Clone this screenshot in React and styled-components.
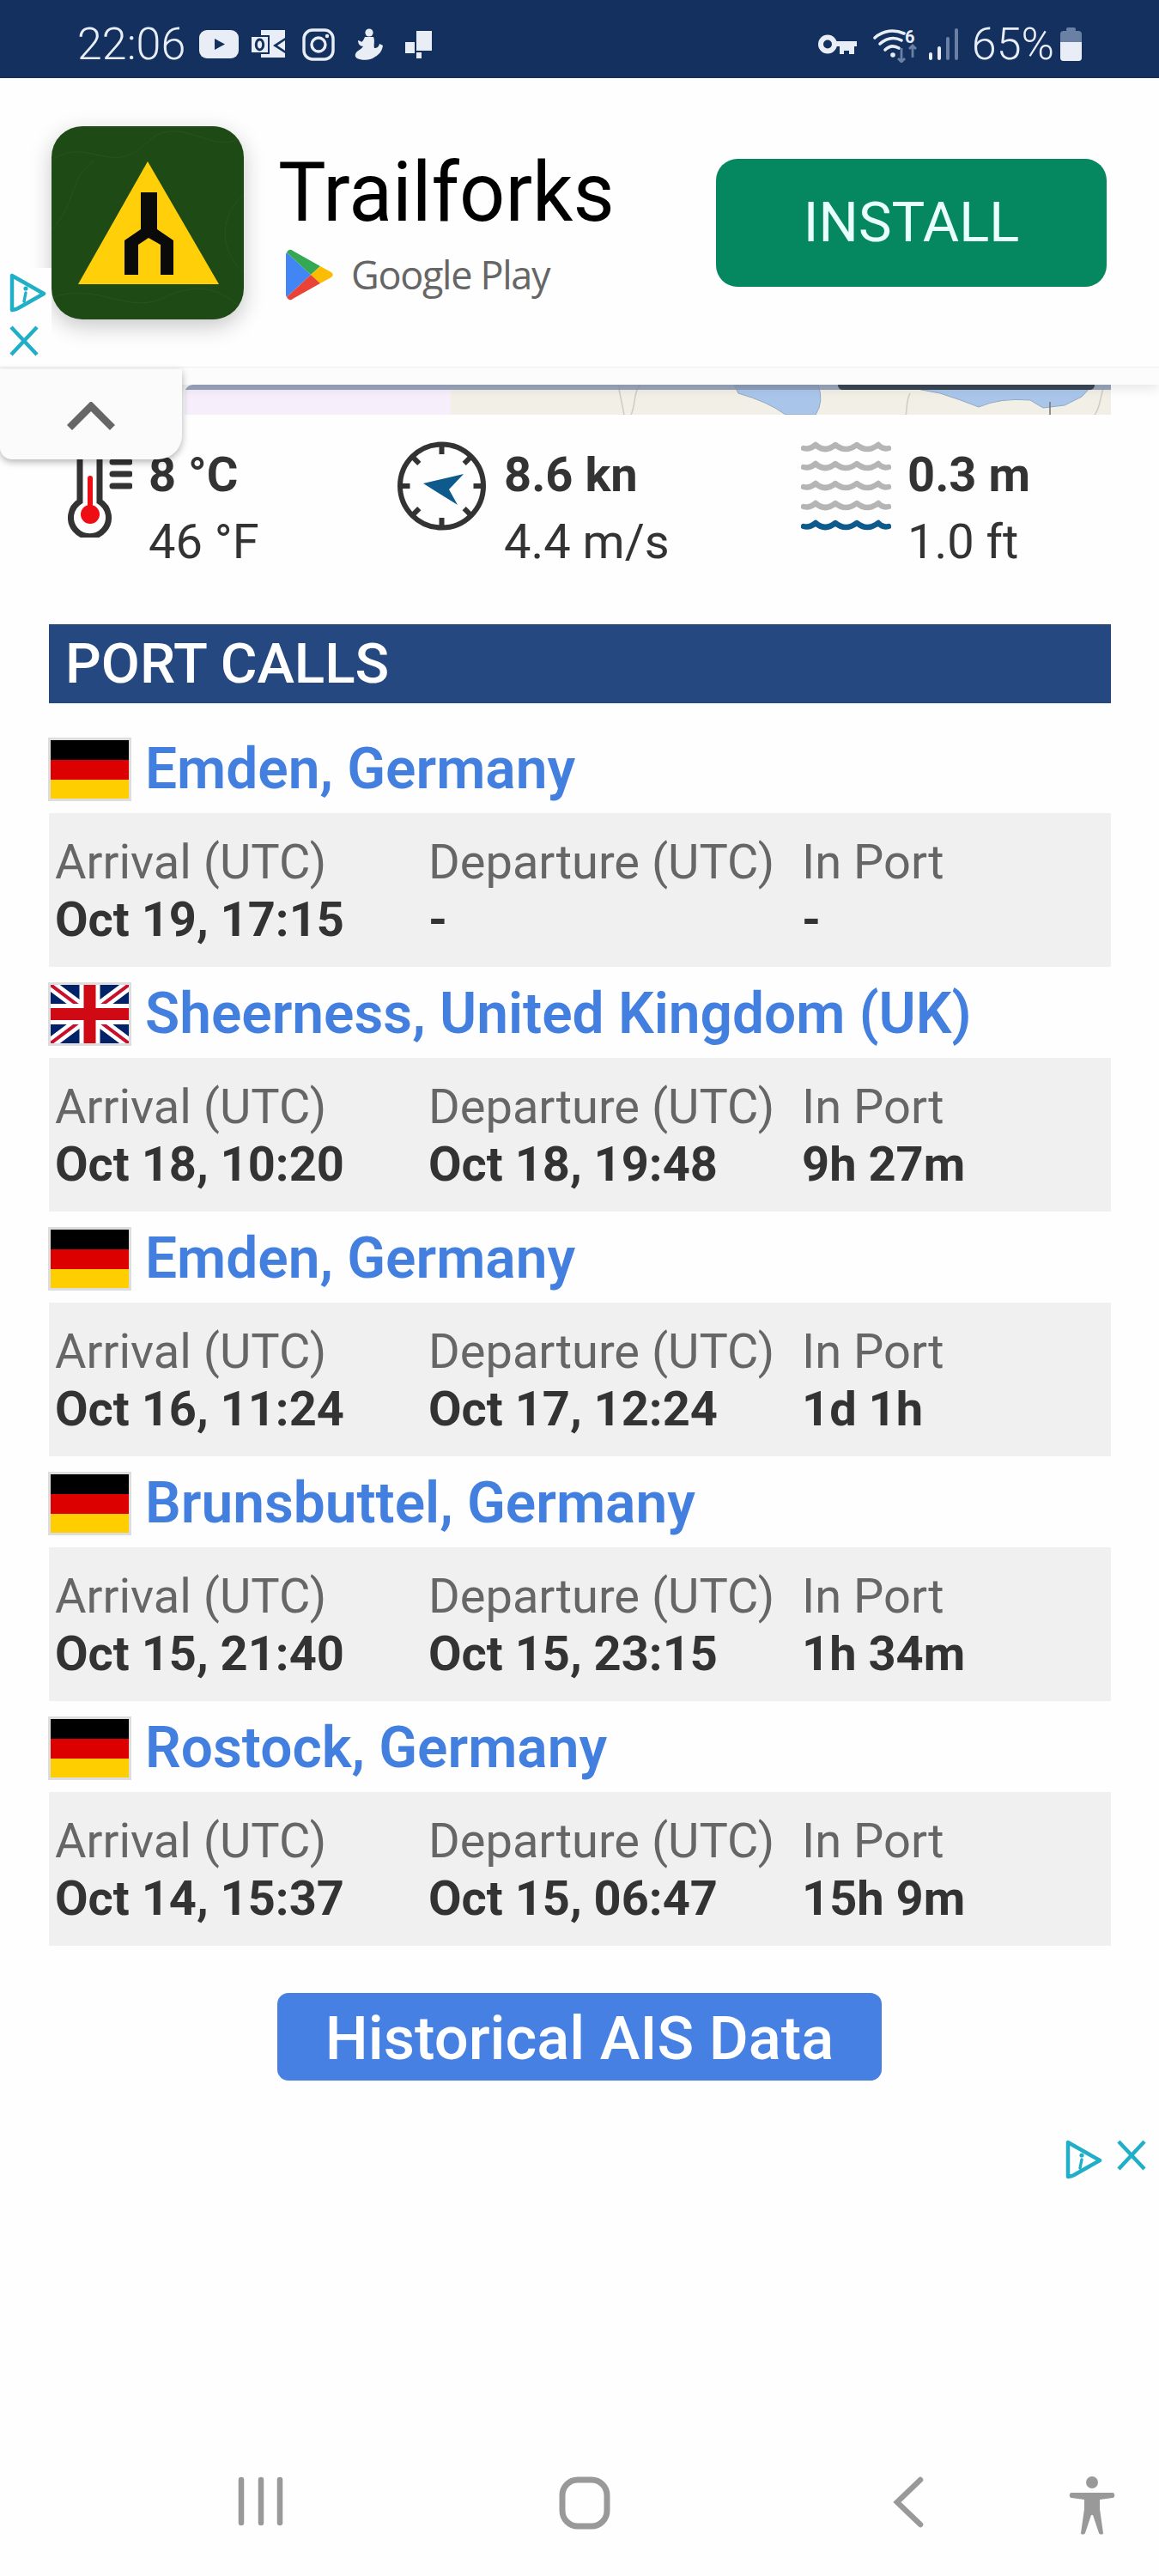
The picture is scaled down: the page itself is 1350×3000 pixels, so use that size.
import React from "react";
import styled, { createGlobalStyle } from "styled-components";

const Global = createGlobalStyle`
  html, body { margin: 0; padding: 0; background: #fff; }
  body { font-family: Roboto, "Liberation Sans", sans-serif; }
`;

const Page = styled.div`
  position: relative;
  width: 1350px;
  height: 3000px;
  overflow: hidden;
  background: #fefefe;
`;

const StatusBar = styled.header`
  height: 91px;
  background: #14305f;
  display: flex;
  align-items: center;
  justify-content: space-between;
  padding: 12px 90px 0 90px;
  box-sizing: border-box;
  color: #e9eef6;
`;
const StatusGroup = styled.div`
  display: flex;
  align-items: center;
`;
const StatusSlot = styled.span`
  display: flex;
  align-items: center;
  margin-left: ${(p) => p.$ml || 0}px;
`;
const StatusText = styled.span`
  font-size: 52px;
  font-weight: 300;
  line-height: 54px;
  margin-left: ${(p) => p.$ml || 0}px;
`;

const AdBanner = styled.section`
  position: relative;
  height: 336px;
  background: #fefefe;
  display: flex;
  align-items: flex-start;
  padding: 56px 61px 0 60px;
  box-sizing: border-box;
  z-index: 3;
`;
const AppIcon = styled.div`
  width: 224px;
  height: 225px;
  border-radius: 36px;
  background: #1f4a17;
  overflow: hidden;
  flex: none;
  box-shadow: 0 8px 26px rgba(0, 0, 0, 0.22);
`;
const AppInfo = styled.div`
  margin-left: 40px;
  width: 510px;
  display: flex;
  flex-direction: column;
`;
const AppName = styled.div`
  font-size: 93.5px;
  line-height: 106px;
  margin-top: 24px;
  color: #000;
  transform: scaleY(1.03);
  transform-origin: left center;
`;
const StoreRow = styled.div`
  display: flex;
  align-items: center;
  margin-top: 13px;
  margin-left: 9px;
  gap: 21px;
`;
const StoreName = styled.span`
  font-family: "Open Sans", Roboto, sans-serif;
  font-size: 45px;
  line-height: 60px;
  color: #666;
  letter-spacing: -1.3px;
`;
const InstallButton = styled.div`
  width: 455px;
  height: 149px;
  margin-top: 38px;
  padding-bottom: 2px;
  box-sizing: border-box;
  border-radius: 25px;
  background: #058760;
  color: #e8fffa;
  font-size: 65px;
  font-weight: 400;
  display: flex;
  align-items: center;
  justify-content: center;
  flex: none;
`;
const AdChoicesPatch = styled.div`
  position: absolute;
  left: 0;
  top: 221px;
  width: 60px;
  height: 112px;
  background: #fefefe;
  display: flex;
  flex-direction: column;
  padding: 6px 0 0 10px;
  box-sizing: border-box;
  gap: 15px;
`;
const AdStrip = styled.div`
  position: relative;
  height: 21px;
  background: #fcfcfc;
  border-top: 1px solid #eee;
  box-sizing: border-box;
  box-shadow: 0 4px 14px rgba(0, 0, 0, 0.1);
  z-index: 2;
`;
const MapStrip = styled.div`
  margin-left: 215px;
  width: 1079px;
  height: 35px;
  border-top-left-radius: 10px;
  overflow: hidden;
  line-height: 0;
`;
const CollapseTab = styled.div`
  position: absolute;
  left: 0;
  top: 430px;
  width: 212px;
  height: 105px;
  background: #fbfbfb;
  border-radius: 0 0 28px 14px;
  box-shadow: 0 3px 8px rgba(0, 0, 0, 0.3);
  z-index: 4;
  display: flex;
  justify-content: center;
  padding-top: 38px;
  box-sizing: border-box;
`;

const Weather = styled.section`
  display: grid;
  grid-template-columns: 384px 470px 1fr;
  margin-top: 31px;
  padding-left: 79px;
`;
const WeatherCell = styled.div`
  display: flex;
  align-items: flex-start;
  gap: ${(p) => p.$gap}px;
`;
const WeatherText = styled.div`
  font-size: 56px;
  line-height: 78px;
  color: #333;
`;
const WeatherMain = styled.div`
  font-weight: 700;
`;

const Section = styled.section`
  margin: 57px 56px 0 57px;
`;
const SectionTitle = styled.h2`
  margin: 0 0 22px;
  height: 92px;
  background: #24487f;
  color: #fff;
  font-size: 65.5px;
  font-weight: 500;
  line-height: 92px;
  padding-left: 19px;
`;
const PortName = styled.div`
  display: flex;
  align-items: flex-start;
  gap: 16px;
  height: 106px;
  padding-top: 18px;
  box-sizing: border-box;
  margin-left: -1px;
`;
const PortLink = styled.a`
  font-size: 65.8px;
  font-weight: 600;
  line-height: 74px;
  color: #437fdf;
  text-decoration: none;
`;
const FlagFrame = styled.div`
  width: 97px;
  height: 74px;
  border: 3px solid #ddd;
  box-sizing: border-box;
  flex: none;
  line-height: 0;
`;
const PortPanel = styled.div`
  display: grid;
  grid-template-columns: 435px 435px 1fr;
  height: 179px;
  padding: 24px 0 0 7px;
  box-sizing: border-box;
  background: #f0f0f0;
`;
const PortLabel = styled.div`
  font-size: 56px;
  line-height: 67px;
  color: #666;
  white-space: nowrap;
`;
const PortValue = styled.div`
  font-size: 56px;
  line-height: 67px;
  font-weight: 700;
  color: #333;
  white-space: nowrap;
`;

const HistoryWrap = styled.div`
  display: flex;
  justify-content: center;
  margin-top: 55px;
`;
const HistoryButton = styled.a`
  width: 704px;
  height: 102px;
  padding-top: 4px;
  box-sizing: border-box;
  border-radius: 13px;
  background: #4680e2;
  color: #fff;
  font-size: 70.5px;
  font-weight: 500;
  display: flex;
  align-items: center;
  justify-content: center;
`;
const AdSlot = styled.div`
  display: flex;
  justify-content: flex-end;
  align-items: flex-start;
  gap: 16px;
  height: 461px;
  padding: 69px 14px 0 0;
  box-sizing: border-box;
`;
const NavBar = styled.nav`
  display: grid;
  grid-template-columns: 374px 389px 205px 1fr;
  padding-left: 277px;
  align-items: start;
`;

const Y = "#21afc8";

const AdChoices = () => (
  <svg width="44" height="46" viewBox="0 0 44 46" fill="none">
    <path d="M4 3 L41 24 L11 41 M4 3 L4 43 L9 42" stroke={Y} strokeWidth="4.5" strokeLinecap="round" strokeLinejoin="round" />
    <circle cx="20" cy="18" r="2.6" fill={Y} />
    <path d="M20 23 L18 33" stroke={Y} strokeWidth="3.4" strokeLinecap="round" />
  </svg>
);
const AdClose = () => (
  <svg width="36" height="36" viewBox="0 0 36 36" fill="none">
    <path d="M3 2 L33 34 M33 2 L3 34" stroke={Y} strokeWidth="4.5" />
  </svg>
);

const C = "#e9eef6";
const Dim = "#6b80a5";

const YouTube = () => (
  <svg width="46" height="33" viewBox="0 0 46 33">
    <rect width="46" height="33" rx="9" fill={C} />
    <path d="M18 10 L30 16.5 L18 23Z" fill="#14305f" />
  </svg>
);
const Outlook = () => (
  <svg width="44" height="34" viewBox="0 0 44 34">
    <path d="M12 0 H40 V9 L26 18 L40 27 V32 H12Z" fill={C} />
    <path d="M40 12 V24 L31 18Z" fill={C} />
    <rect x="0" y="7" width="21" height="20" fill={C} stroke="#14305f" strokeWidth="2" />
    <ellipse cx="10.5" cy="17" rx="4.2" ry="6" fill="none" stroke="#14305f" strokeWidth="3" />
  </svg>
);
const Instagram = () => (
  <svg width="38" height="38" viewBox="0 0 38 38" fill="none">
    <rect x="2" y="2" width="34" height="34" rx="10" stroke={C} strokeWidth="3.4" />
    <circle cx="19" cy="19" r="8" stroke={C} strokeWidth="3.4" />
    <circle cx="29" cy="9" r="2.2" fill={C} />
  </svg>
);
const Figure = () => (
  <svg width="33" height="38" viewBox="0 0 33 38">
    <circle cx="17" cy="5" r="4.6" fill={C} />
    <path d="M12 10 H22 C24 15 22 18 23 23 C26 23 28 22 29 18 L33 20 C32 27 28 31 24 33 C20 37 9 38 3 35 C0 33 0 30 3 27 C5 25 8 24 10 21 C6 21 4 18 4 14 L7 15 C8 17 10 15 12 10Z" fill={C} />
  </svg>
);
const Blocks = () => (
  <svg width="31" height="32" viewBox="0 0 31 32" fill={C}>
    <rect x="13" y="0" width="18" height="23" />
    <rect x="0" y="13" width="11" height="13" />
    <rect x="13" y="25" width="6" height="7" />
  </svg>
);
const Key = () => (
  <svg width="47" height="26" viewBox="0 0 47 26" fill="none">
    <circle cx="12" cy="12.5" r="8" stroke={C} strokeWidth="6" />
    <path d="M20 9 H46 V15 H43 V24 H37 V20 H31 V24 H26 V15 H20Z" fill={C} />
  </svg>
);
const Wifi = () => (
  <svg width="52" height="42" viewBox="0 0 52 42" fill="none">
    <path d="M2 13 C12 4 25 3 36 8" stroke={C} strokeWidth="3.6" strokeLinecap="round" />
    <path d="M8 20 C16 13 25 12 33 16" stroke={C} strokeWidth="3.6" strokeLinecap="round" />
    <path d="M14 27 C19 22 25 22 30 25" stroke={C} strokeWidth="3.6" strokeLinecap="round" />
    <circle cx="23" cy="33" r="2.8" fill={C} />
    <path d="M33 25 V41 M29 37 L33 41 L37 37" stroke={Dim} strokeWidth="2.8" />
    <path d="M46 36 V22 M42 26 L46 22 L50 26" stroke={Dim} strokeWidth="2.8" />
    <text x="37" y="19" fontFamily="Roboto" fontWeight="700" fontSize="20" fill={C}>6</text>
  </svg>
);
const Signal = () => (
  <svg width="35" height="37" viewBox="0 0 35 37">
    <rect x="0" y="28" width="4" height="9" rx="2" fill={C} />
    <rect x="10" y="21" width="4" height="16" rx="2" fill={C} />
    <rect x="20" y="10" width="4" height="27" rx="2" fill={Dim} />
    <rect x="30" y="0" width="4" height="37" rx="2" fill={Dim} />
  </svg>
);
const Battery = () => (
  <svg width="25" height="39" viewBox="0 0 25 39">
    <rect x="7" y="0" width="11" height="5" rx="2" fill={Dim} />
    <rect x="0" y="4" width="25" height="35" rx="4" fill={Dim} />
    <path d="M0 17 H25 V35 A4 4 0 0 1 21 39 H4 A4 4 0 0 1 0 35Z" fill={C} />
  </svg>
);

const ForkIcon = () => (
  <svg width="224" height="225" viewBox="0 0 224 225">
    <g fill="none" stroke="#2a5a20" strokeWidth="1" opacity="0.7">
      <path d="M0 40 C40 10 70 60 110 20 S190 40 224 10" />
      <path d="M0 120 C30 90 20 60 50 40 M224 80 C190 110 200 150 224 170" />
      <path d="M0 200 C50 180 90 220 130 200 S200 190 224 215" />
    </g>
    <path d="M112 41 L195 184 H31Z" fill="#ffcf0a" />
    <path d="M104 77 H123 V120 L142 133 V173 H127 V138 L113 130 L101 138 V173 H85 V133 L104 120Z" fill="#0a0a0a" />
  </svg>
);
const PlayLogo = () => (
  <svg width="55" height="60" viewBox="0 0 55 60">
    <path d="M1 4 C0 5 0 6 0 8 V52 C0 54 0 55 1 56 L29 30Z" fill="#4285f4" />
    <path d="M1 4 C3 0 6 0 8 2 L40 20 L29 30Z" fill="#34a853" />
    <path d="M40 20 L51 26 C56 29 56 31 51 34 L40 40 L29 30Z" fill="#fbbc04" />
    <path d="M1 56 C3 60 6 60 8 58 L40 40 L29 30Z" fill="#ea4335" />
  </svg>
);
const Chevron = () => (
  <svg width="56" height="34" viewBox="0 0 56 34" fill="none">
    <path d="M3 30 L28 5 L53 30" stroke="#666" strokeWidth="8.5" />
  </svg>
);
const MapArt = () => (
  <svg width="1079" height="35" viewBox="0 0 1079 35">
    <rect width="310" height="35" fill="#f6effb" />
    <rect x="310" width="769" height="35" fill="#f2efe6" />
    <path d="M640 0 L645 10 Q680 20 700 35 L735 35 Q745 20 738 0Z" fill="#a9c6ea" stroke="#8fa9c4" strokeWidth="1" />
    <path d="M848 4 L880 10 Q905 18 925 26 Q950 15 985 18 L1000 27 L1025 24 L1045 14 L1058 0 L848 0Z" fill="#a9c6ea" stroke="#8fa9c4" strokeWidth="1" />
    <g fill="none" stroke="#cfcdc4" strokeWidth="1.6">
      <path d="M505 0 L512 35 M530 0 C522 12 526 22 520 35" />
      <path d="M845 10 C840 20 842 28 840 35 M1070 4 C1066 18 1066 28 1060 35" />
    </g>
    <path d="M1008 20 V35" stroke="#777" strokeWidth="1.6" />
    <rect width="1079" height="6" fill="#8b99b3" opacity="0.85" />
    <path d="M761 0 H1060 V1 A6 6 0 0 1 1054 6 H767 A6 6 0 0 1 761 1Z" fill="#3b4656" />
  </svg>
);

const Thermometer = () => (
  <svg width="75" height="112" viewBox="0 0 75 112" fill="none">
    <path d="M14 0 V70 A22 22 0 1 0 37 70 V0" stroke="#333" strokeWidth="7" />
    <circle cx="26" cy="85" r="11" fill="#ee0d14" />
    <path d="M26 43 V85" stroke="#ee0d14" strokeWidth="6" strokeLinecap="round" />
    <path d="M52 24 H72 M52 38 H72 M52 52 H72" stroke="#333" strokeWidth="7" strokeLinecap="round" />
  </svg>
);
const Compass = () => {
  const ticks = [0, 45, 90, 135, 180, 225, 270, 315];
  return (
    <svg width="103" height="104" viewBox="0 0 103 104" fill="none">
      <circle cx="51.5" cy="52" r="48.5" stroke="#333" strokeWidth="6" />
      {ticks.map((a) => (
        <path key={a} d="M51.5 3 V15" stroke="#333" strokeWidth="6" transform={`rotate(${a} 51.5 52)`} />
      ))}
      <path d="M30 49 L77 38 L60 56 L70 74Z" fill="#0f5a8c" />
    </svg>
  );
};
const Waves = () => {
  const wave = (y) =>
    `M3 ${y + 1} Q10 ${y + 3} 17 ${y - 3} Q28 ${y + 7} 40 ${y - 3} Q52 ${y + 7} 65 ${y - 3} Q77 ${y + 7} 90 ${y - 3} Q95 ${y + 3} 102 ${y + 1}`;
  return (
    <svg width="105" height="104" viewBox="0 0 105 104" fill="none" strokeWidth="6.5" strokeLinecap="round" strokeLinejoin="round">
      {[7, 29, 52, 75].map((y) => (
        <path key={y} d={wave(y)} stroke="#b5b5b5" />
      ))}
      <path d={wave(98)} stroke="#0f5a8c" />
    </svg>
  );
};

const GermanFlag = () => (
  <svg width="91" height="68" viewBox="0 0 91 68" preserveAspectRatio="none">
    <rect width="91" height="23" fill="#000" />
    <rect y="23" width="91" height="23" fill="#dd0000" />
    <rect y="46" width="91" height="22" fill="#ffce00" />
  </svg>
);
const UkFlag = () => (
  <svg width="91" height="68" viewBox="0 0 91 68">
    <rect width="91" height="68" fill="#012169" />
    <path d="M0 0 L91 68 M91 0 L0 68" stroke="#fff" strokeWidth="13" />
    <path d="M0 0 L91 68 M91 0 L0 68" stroke="#c8102e" strokeWidth="4" />
    <path d="M45.5 0 V68 M0 34 H91" stroke="#fff" strokeWidth="24" />
    <path d="M45.5 0 V68 M0 34 H91" stroke="#cf0a14" strokeWidth="14" />
  </svg>
);

const calls = [
  { name: "Emden, Germany", flag: "de", arr: "Oct 19, 17:15", dep: "-", port: "-" },
  { name: "Sheerness, United Kingdom (UK)", flag: "uk", arr: "Oct 18, 10:20", dep: "Oct 18, 19:48", port: "9h 27m" },
  { name: "Emden, Germany", flag: "de", arr: "Oct 16, 11:24", dep: "Oct 17, 12:24", port: "1d 1h" },
  { name: "Brunsbuttel, Germany", flag: "de", arr: "Oct 15, 21:40", dep: "Oct 15, 23:15", port: "1h 34m" },
  { name: "Rostock, Germany", flag: "de", arr: "Oct 14, 15:37", dep: "Oct 15, 06:47", port: "15h 9m" },
];

const Field = ({ label, value }) => (
  <div>
    <PortLabel>{label}</PortLabel>
    <PortValue>{value}</PortValue>
  </div>
);

export default function App() {
  return (
    <Page>
      <Global />
      <StatusBar>
        <StatusGroup>
          <StatusText>22:06</StatusText>
          <StatusSlot $ml={16}><YouTube /></StatusSlot>
          <StatusSlot $ml={14}><Outlook /></StatusSlot>
          <StatusSlot $ml={16}><Instagram /></StatusSlot>
          <StatusSlot $ml={23}><Figure /></StatusSlot>
          <StatusSlot $ml={26}><Blocks /></StatusSlot>
        </StatusGroup>
        <StatusGroup>
          <StatusSlot><Key /></StatusSlot>
          <StatusSlot $ml={18}><Wifi /></StatusSlot>
          <StatusSlot $ml={13}><Signal /></StatusSlot>
          <StatusText $ml={15}>65%</StatusText>
          <StatusSlot $ml={7}><Battery /></StatusSlot>
        </StatusGroup>
      </StatusBar>

      <AdBanner>
        <AppIcon><ForkIcon /></AppIcon>
        <AppInfo>
          <AppName>Trailforks</AppName>
          <StoreRow>
            <PlayLogo />
            <StoreName>Google Play</StoreName>
          </StoreRow>
        </AppInfo>
        <InstallButton>INSTALL</InstallButton>
        <AdChoicesPatch>
          <AdChoices />
          <AdClose />
        </AdChoicesPatch>
      </AdBanner>
      <AdStrip />
      <MapStrip><MapArt /></MapStrip>
      <CollapseTab><Chevron /></CollapseTab>

      <Weather>
        <WeatherCell $gap={19}>
          <Thermometer />
          <WeatherText>
            <WeatherMain>8 °C</WeatherMain>
            46 °F
          </WeatherText>
        </WeatherCell>
        <WeatherCell $gap={21}>
          <Compass />
          <WeatherText>
            <WeatherMain>8.6 kn</WeatherMain>
            4.4 m/s
          </WeatherText>
        </WeatherCell>
        <WeatherCell $gap={19}>
          <Waves />
          <WeatherText>
            <WeatherMain>0.3 m</WeatherMain>
            1.0 ft
          </WeatherText>
        </WeatherCell>
      </Weather>

      <Section>
        <SectionTitle>PORT CALLS</SectionTitle>
        {calls.map((c, i) => (
          <div key={i}>
            <PortName>
              <FlagFrame>{c.flag === "uk" ? <UkFlag /> : <GermanFlag />}</FlagFrame>
              <PortLink>{c.name}</PortLink>
            </PortName>
            <PortPanel>
              <Field label="Arrival (UTC)" value={c.arr} />
              <Field label="Departure (UTC)" value={c.dep} />
              <Field label="In Port" value={c.port} />
            </PortPanel>
          </div>
        ))}
      </Section>

      <HistoryWrap>
        <HistoryButton>Historical AIS Data</HistoryButton>
      </HistoryWrap>
      <AdSlot>
        <AdChoices />
        <AdClose />
      </AdSlot>
      <NavBar>
        <svg width="56" height="58" viewBox="0 0 56 58" fill="none" stroke="#999" strokeWidth="6.5" strokeLinecap="round">
          <path d="M4 4 V54 M27 4 V54 M49 4 V54" />
        </svg>
        <svg width="60" height="62" viewBox="0 0 60 62" fill="none">
          <rect x="4" y="4" width="52" height="54" rx="18" stroke="#999" strokeWidth="7" />
        </svg>
        <svg width="36" height="60" viewBox="0 0 36 60" fill="none">
          <path d="M32 4 L5 30 L32 56" stroke="#999" strokeWidth="6.5" strokeLinecap="round" />
        </svg>
        <svg width="54" height="68" viewBox="0 0 54 68" fill="#999">
          <circle cx="27" cy="7" r="7" />
          <path d="M3 19 H51 C54 19 54 25 51 25 L36 27 V38 L40 66 C40 68 36 68 35 66 L28 45 H26 L19 66 C18 68 14 68 14 66 L18 38 V27 L3 25 C0 25 0 19 3 19Z" />
        </svg>
      </NavBar>
    </Page>
  );
}
